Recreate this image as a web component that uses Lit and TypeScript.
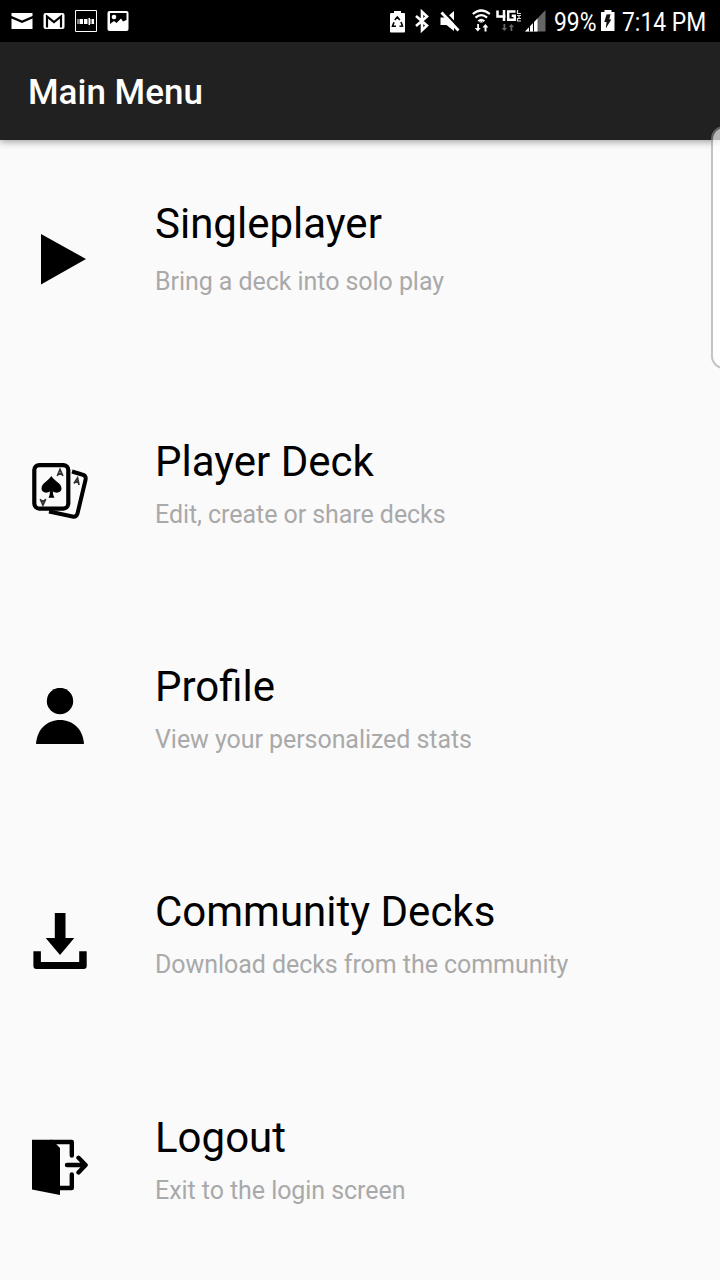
import { LitElement, html, css, svg } from "lit";
import { customElement, property } from "lit/decorators.js";

const icons: Record<string, unknown> = {
  play: svg`<path d="M9 3 54 28 9 53.500z"/>`,
  cards: svg`
    <g fill="none" stroke="#000">
      <path stroke-width="4" d="M40 8.500 50 11.500Q54.500 12.500 53.500 17L45.500 50.500Q44.500 54.500 40.500 53.500L17 48.500"/>
      <rect stroke-width="4.200" x="2.300" y="2.100" width="34" height="43.500" rx="5" fill="#fafafa"/>
    </g>
    <path d="M19.300 13C21.500 17.500 29.500 20 29.500 25.500 29.500 29.500 24 31 20.800 28.200Q20.800 32 22.500 34.800H16.500Q18 32 18 28.200C14.500 31 9.500 29.500 9.500 25.500 9.500 20 17 17.500 19.300 13z"/>
    <g fill="none" stroke="#333" stroke-width="1.800">
      <path d="M25.300 13 28 6.500 30.900 13M26 11h4M8.300 36l2.600 6 2.800-6M9 38h4M42 20.500 45.500 15 47 22M43 19h3.800"/>
    </g>`,
  person: svg`<circle cx="28" cy="13" r="13.200"/><path d="M4 56C5 41 15 32 28 32S51 41 52 56z"/>`,
  download: svg`<path d="M22.800 0h10.700v25h8.800L28 41.900 13.700 25h9.100zM1.400 38.300h7.500V49h38.300V38.300h7.500V53q0 3-3 3H4.400q-3 0-3-3z"/>`,
  exit: svg`
    <path d="M0 .8H20L28 9V56L0 50.500z"/>
    <g fill="none" stroke="#000" stroke-width="4.400" stroke-linecap="round" stroke-linejoin="round">
      <path d="M19 3H39.800V16.500M39.800 35.500V49H28M35 26H53M46.500 18.800 53.600 26 46.500 33.500"/>
    </g>`,
};

@customElement("status-bar")
class StatusBar extends LitElement {
  static styles = css`
    :host { display: flex; justify-content: space-between; height: 42px; background: #000; color: #fff; }
    svg { display: block; flex: none; }
    .right { display: flex; }
    .text { font: 26px/30px Roboto, sans-serif; white-space: nowrap; padding-top: 7px; transform-origin: 0 0; transform: scaleX(0.88); }
    .percent { width: 41px; margin-left: 4px; }
    .clock { width: 98px; }
  `;
  render() {
    return html`
      <svg width="140" height="42" fill="#fff">
        <path d="M12 13h20.500v3L22 20.500 11.500 16v-3zM11.500 18.500 22 23l10.500-4.500V29h-21z"/>
        <rect x="43.500" y="13" width="21" height="16" rx="2"/>
        <path d="M47 27.500V16.500l7 5.500 7-5.500v11" fill="none" stroke="#000" stroke-width="2.200"/>
        <path d="M75.500 10.500h21v21h-21z" fill="#000" stroke="#fff"/>
        <path d="M77.500 19h1v5h-1zM79.500 19h3.500v5h-3.500zM84 19h3.500v5H84zM88.500 18h1.500V25h-1.500zM90.500 19h1v5h-1zM92 19h2v5h-2z"/>
        <rect x="107.500" y="11" width="21" height="20" rx="2"/>
        <path d="M110 26v-2l4-3 2.500 2 4.500-4.500 2 3 3.500-1.500V13H110z" fill="#000"/>
        <circle cx="114" cy="17" r="2.300"/><path d="m109.500 26.500 5-4.500 2.500 2.500 4.500-4 1.500 2 4-2.500v7z"/>
      </svg>
      <div class="right">
        <svg width="170" height="42" viewBox="380 0 170 42" fill="#fff">
          <path d="M391.500 13h2.500v-2h7v2h3q1 0 1 1v17.500q0 1-1 1h-13q-1 0-1-1V14q0-1 1.500-1z"/>
          <path d="m394.800 20 2.500-3 2.500 3M401 22l1.500 4-3 .3M396 26.300h-3.500l1.500-4" fill="none" stroke="#000" stroke-width="1.600"/>
          <path d="m416 16 11 9.500-5 4.800V11.800l5 4.700-11 9.500" fill="none" stroke="#fff" stroke-width="2.600"/>
          <path d="M440.500 17.500h6l7.500-6.500v20l-7.500-6h-6z"/>
          <path d="m441.500 9 20 21" stroke="#000" stroke-width="2.500"/><path d="m441.500 12.500 17 18" stroke="#fff" stroke-width="2.800"/>
          <g fill="none" stroke="#fff" stroke-width="2.200">
            <path d="M472.800 14q8.500-7 17 0M475.500 17.700q5.800-5 11.600 0M478.300 21.200q3-2.700 6 0"/>
          </g>
          <path d="m481.300 20.500 1.800 2h-3.600zM477.200 24h1.800v4h1.800l-3 3.500-3-3.500h2.400zM484.500 31.500h2v-4h1.900l-3-3.500-3 3.500h2.100z"/>
          <path d="M497.500 10.500v6h8M504 10v11M515.500 11.500h-7.300v8.300h6.500v-4h-3" fill="none" stroke="#fff" stroke-width="2.500"/>
          <path d="M517.500 10v3.500h3.500M517 15.500h4M519 15.500V18M521 18.500h-3.500v2.500h3.500" fill="none" stroke="#ddd" stroke-width="1.200"/>
          <path d="M503.500 24h1.800v4h1.700l-2.600 3-2.600-3h1.700zM510.500 31h1.800v-4h1.700l-2.600-3-2.600 3h1.700z" fill="#666"/>
          <path d="M525 31.500 545.500 10v21.500z" fill="#666"/>
          <path d="M525 31.500 537.500 18.500v13z"/>
          <path d="M529.500 26v5.500M533.500 22v9.500" stroke="#000"/>
        </svg>
        <div class="percent"><div class="text">99%</div></div>
        <svg width="27" height="42" viewBox="595 0 27 42">
          <path d="M601 12h3.500v-2h7v2h3v19H601z" fill="#fff"/>
          <path d="m606.500 14.500 4-.3-1.200 5 2 .2-5.500 9 .7-6.300-2.200-.2z" fill="#111"/>
        </svg>
        <div class="clock"><div class="text">7:14 PM</div></div>
      </div>`;
  }
}

@customElement("menu-row")
class MenuRow extends LitElement {
  @property() icon = "";
  @property() heading = "";
  @property() detail = "";
  static styles = css`
    :host { display: flex; height: 225px; padding-left: 32px; box-sizing: border-box; }
    :host([tall]) { height: 226px; }
    :host([first]) { height: 238px; }
    svg { width: 56px; height: 56px; margin: 85px 67px 0 0; overflow: hidden; flex: none; }
    .copy { padding-top: 59px; }
    .heading { font-size: 42px; line-height: 50px; color: #000; }
    .detail { font-size: 25px; line-height: 30px; letter-spacing: -0.06px; margin-top: 13px; color: #a9a9a9; }
    :host([first]) svg { margin-top: 91px; }
    :host([first]) .detail { margin-top: 18px; }
  `;
  render() {
    return html`<svg viewBox="0 0 56 56">${icons[this.icon]}</svg>
      <div class="copy"><div class="heading">${this.heading}</div><div class="detail">${this.detail}</div></div>`;
  }
}

@customElement("app-root")
class AppRoot extends LitElement {
  static styles = css`
    :host { display: block; position: relative; height: 1280px; overflow: hidden; background: #fafafa; font-family: Roboto, sans-serif; }
    .toolbar { display: flex; align-items: center; height: 98px; padding: 2px 28px 0 28px; box-sizing: border-box; background: #212121; color: #fff; font-size: 35px; font-weight: 500; box-shadow: 0 2px 7px rgba(0, 0, 0, 0.36); }
    .edge { position: absolute; left: 711px; top: 126px; width: 30px; height: 243px; box-sizing: border-box; border: 2px solid rgba(150, 150, 150, 0.55); border-radius: 13px; background: rgba(255, 255, 255, 0.68); background-clip: padding-box; }
  `;
  render() {
    return html`
      <status-bar></status-bar>
      <div class="toolbar">Main Menu</div>
      <menu-row first icon="play" heading="Singleplayer" detail="Bring a deck into solo play"></menu-row>
      <menu-row icon="cards" heading="Player Deck" detail="Edit, create or share decks"></menu-row>
      <menu-row icon="person" heading="Profile" detail="View your personalized stats"></menu-row>
      <menu-row tall icon="download" heading="Community Decks" detail="Download decks from the community"></menu-row>
      <menu-row tall icon="exit" heading="Logout" detail="Exit to the login screen"></menu-row>
      <div class="edge"></div>`;
  }
}
